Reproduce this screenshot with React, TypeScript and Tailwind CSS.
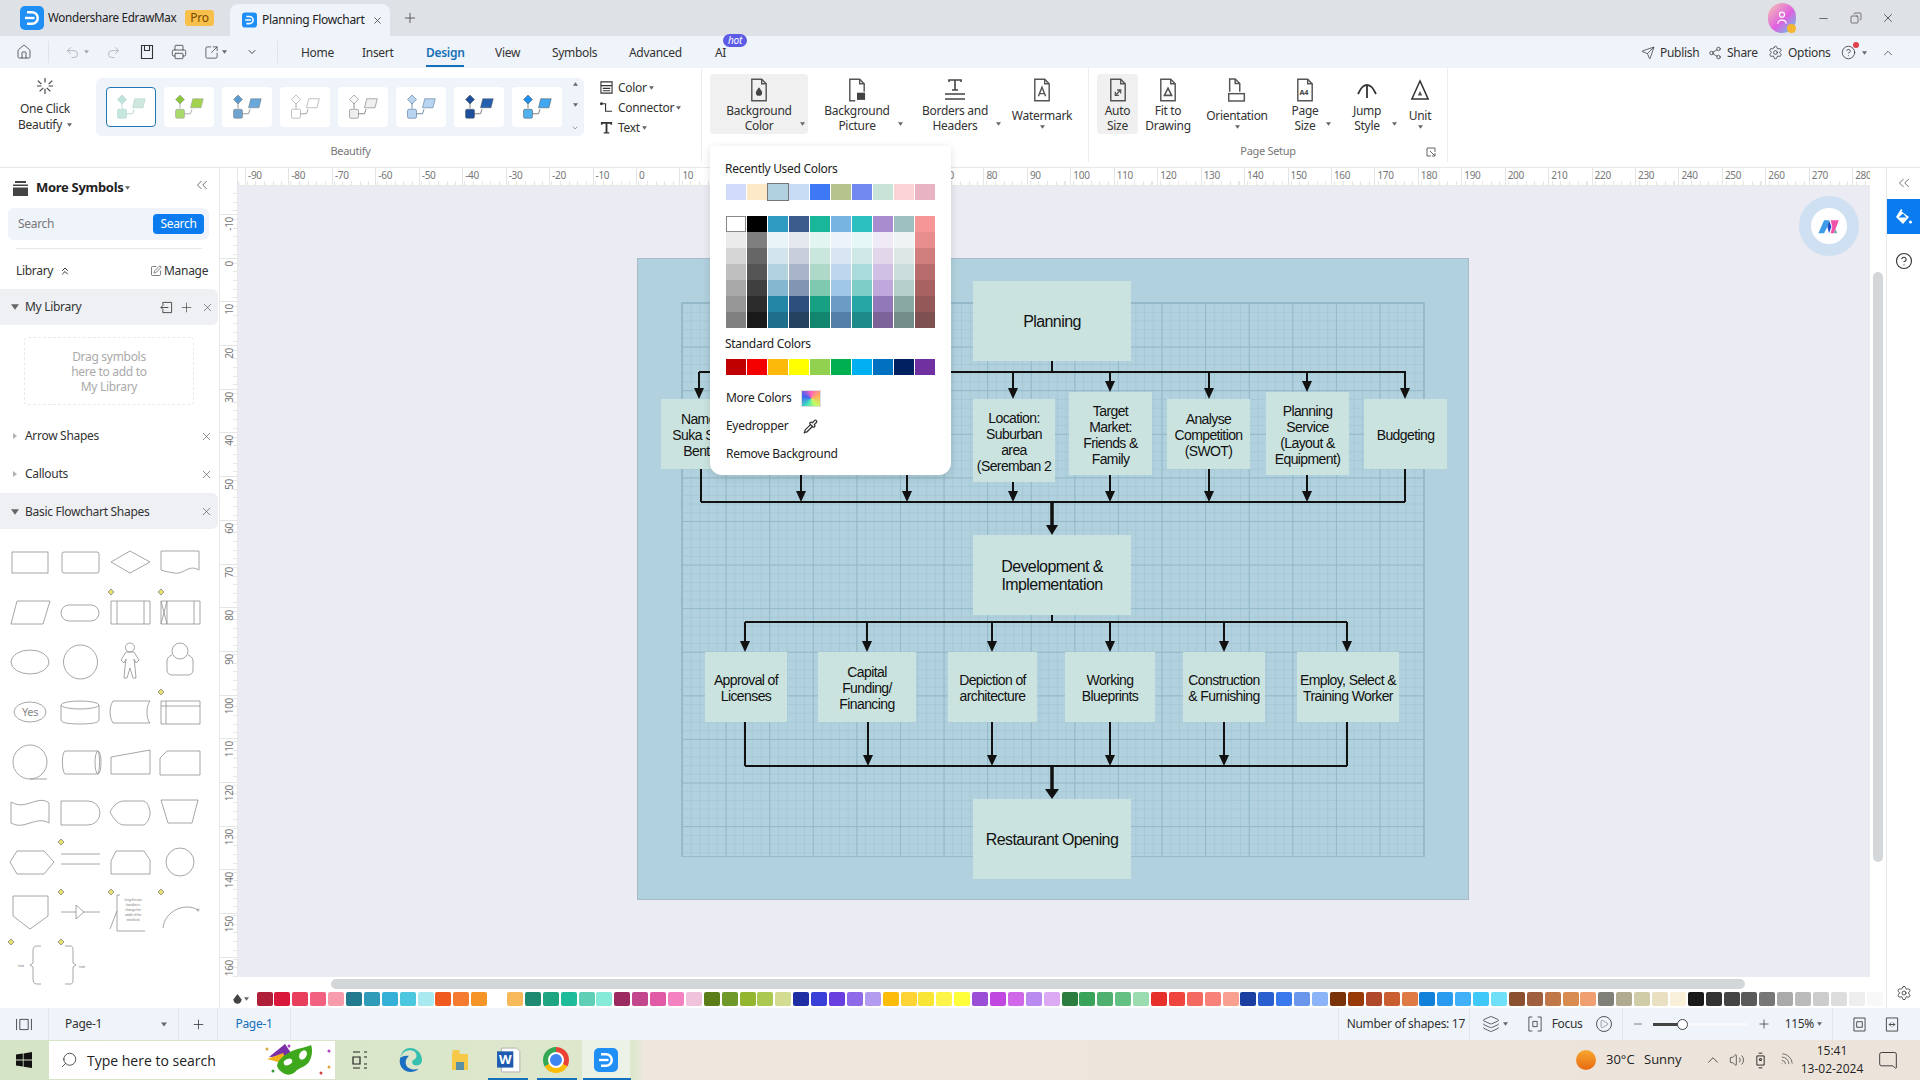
import type { ReactNode } from "react"
import {
  Home,
  Undo2,
  Redo2,
  Printer,
  SquareArrowOutUpRight,
  ChevronDown,
  ChevronUp,
  ChevronsLeft,
  ChevronsUp,
  Send,
  Share2,
  Settings,
  CircleHelp,
  X,
  Plus,
  Minus,
  SquarePen,
  Search,
  Copy,
  Layers,
  Play,
  Volume2,
  Wifi,
  MessageSquare,
  Pipette,
} from "lucide-react"

const font = "font-['Noto_Sans','Open_Sans',sans-serif]"

const Caret = ({ className = "" }: { className?: string }) => (
  <svg viewBox="0 0 6 4" className={`w-[5px] h-[4px] fill-[#666] ${className}`}>
    <path d="M0 0h6L3 4z" />
  </svg>
)

const EdrawLogo = ({ size = "w-6 h-6" }: { size?: string }) => (
  <svg viewBox="0 0 24 24" className={size}>
    <rect width="24" height="24" rx="5" fill="#1f8ff5" />
    <path d="M7 5h5a7 7 0 0 1 0 14H7v-2.500h5a4.500 4.500 0 0 0 0-9H7z" fill="#fff" />
    <path d="M5 10.800h9.500v2.400H5z" fill="#fff" />
  </svg>
)

// document outline used by most of the ribbon icons
const Doc = ({ children }: { children?: ReactNode }) => (
  <svg viewBox="0 0 20 26" className="w-[18px] h-[24px] fill-none stroke-[#555] stroke-[1.6]">
    <path d="M2 1h11l5 5v19H2z" />
    <path d="M13 1v5h5" />
    {children}
  </svg>
)

const ribbonIcon: Record<string, ReactNode> = {
  bgColor: (
    <Doc>
      <path d="M10 10c2 3 3.500 4.400 3.500 6a3.500 3.500 0 0 1-7 0c0-1.600 1.500-3 3.500-6z" className="fill-[#444] stroke-none" />
    </Doc>
  ),
  bgPicture: (
    <svg viewBox="0 0 20 26" className="w-[18px] h-[24px] fill-none stroke-[#555] stroke-[1.6]">
      <path d="M8 25H2V1h11l5 5v9" />
      <path d="M13 1v5h5" />
      <rect x="10" y="16" width="9" height="8" className="fill-[#444] stroke-none" />
    </svg>
  ),
  borders: (
    <svg viewBox="0 0 24 24" className="w-[24px] h-[24px] stroke-[#444] stroke-[1.6] fill-none">
      <path d="M6 4V2h12v2M12 2v10M9 12h6M2 16h20M2 21h20" />
    </svg>
  ),
  watermark: (
    <Doc>
      <path d="M6 20l4-10 4 10M7.500 17h5" />
    </Doc>
  ),
  autoSize: (
    <Doc>
      <path d="M8 18l5-5M9 13h4v4M7 15v4h4" className="stroke-[1.4]" />
    </Doc>
  ),
  fit: (
    <Doc>
      <path d="M10 11l4 8H6z" className="stroke-[1.8]" />
    </Doc>
  ),
  orientation: (
    <svg viewBox="0 0 24 26" className="w-[22px] h-[24px] fill-none stroke-[#555] stroke-[1.6]">
      <path d="M4 15V1h6l5 5v9" />
      <path d="M10 1v5h5" />
      <rect x="3" y="17" width="17" height="8" />
    </svg>
  ),
  pageSize: (
    <Doc>
      <text x="4" y="19" className="fill-[#444] stroke-none text-[8px] font-bold">A4</text>
    </Doc>
  ),
  jump: (
    <svg viewBox="0 0 24 24" className="w-[24px] h-[24px] fill-none stroke-[#333] stroke-[1.8]">
      <path d="M3 16c3-6 5-9 9-9s6 3 9 9M12 7v13" />
    </svg>
  ),
  unit: (
    <svg viewBox="0 0 22 24" className="w-[20px] h-[24px] fill-none stroke-[#333] stroke-[1.6]">
      <path d="M11 2l9 20H2z" />
      <path d="M11 13l2.500 5h-5z" className="fill-[#555] stroke-none" />
    </svg>
  ),
}

const RibbonBtn = ({ icon, lines, width, arrow, active }: { icon: string; lines: string[]; width: string; arrow?: "side" | "below"; active?: boolean }) => (
  <div className={`relative h-[60px] flex flex-col items-center ${width} ${active ? "bg-[#f0f0f0] rounded-sm" : ""}`}>
    <div className="h-[27px] mt-[2px] flex items-center justify-center">{ribbonIcon[icon]}</div>
    <div className={`text-center text-[12px] leading-[15px] text-[#333] whitespace-nowrap ${lines.length === 1 ? "mt-[5px]" : ""}`}>
      {lines.map((l) => (
        <div key={l}>{l}</div>
      ))}
    </div>
    {arrow === "side" && <Caret className="absolute right-[3px] bottom-[8px]" />}
    {arrow === "below" && <Caret className="mt-[2px]" />}
  </div>
)

const gallery = [
  { d: "#bfe3dc", p: "#cfe8df", s: "#c6e6e0", line: "#a8cfc8" },
  { d: "#8cc63f", p: "#a3d24f", s: "#a9d86b", line: "#999" },
  { d: "#5b9bd0", p: "#6aa8dc", s: "#6ea3d0", line: "#777" },
  { d: "#fff", p: "#fff", s: "#fff", line: "#888" },
  { d: "#f8f8f8", p: "#f0f0f0", s: "#eee", line: "#666" },
  { d: "#b8d4ee", p: "#b8d4f0", s: "#b8d4f0", line: "#44688c" },
  { d: "#1d4f9c", p: "#2460b0", s: "#1d4f9c", line: "#555" },
  { d: "#1f8ff0", p: "#40a8f0", s: "#50b0f0", line: "#555" },
]

const Thumb = ({ d, p, s, line }: { d: string; p: string; s: string; line: string }) => (
  <svg viewBox="0 0 50 40" className="w-[38px] h-[30px]">
    <path d="M13 14v8M13 29h14l2-6" fill="none" stroke={line} strokeWidth="1" />
    <path d="M13 4l6 6-6 6-6-6z" fill={d} stroke={line} strokeWidth=".7" />
    <path d="M30 9h14l-3 12H27z" fill={p} stroke={line} strokeWidth=".7" />
    <rect x="7" y="23" width="12" height="12" rx="2" fill={s} stroke={line} strokeWidth=".7" />
  </svg>
)

const recent = ["#d0dcfa", "#fde8c8", "#b1d1de", "#c8dcf5", "#3f78f5", "#b4c48c", "#7088f0", "#c8e4d8", "#fcd4d8", "#e8b4c4"]
const standard = ["#c00000", "#f50000", "#fdb90a", "#ffff00", "#92d050", "#00b050", "#00b0f0", "#0070c0", "#002060", "#7030a0"]
const paletteRows = [
  ["#ffffff", "#000000", "#2e9cc0", "#3b5b8c", "#1ab69a", "#78b4e2", "#2cc0c0", "#a98cd0", "#9fc0c0", "#f79696"],
  ["#ebebeb", "#7f7f7f", "#e9f4f8", "#e4e8ee", "#e3f5f0", "#ecf3fa", "#e5f7f6", "#f0eaf6", "#eef3f3", "#e88d8d"],
  ["#d5d5d5", "#666666", "#d2e4ec", "#c8cedc", "#c9e7dc", "#d8e6f4", "#cfe8e8", "#e2d6ea", "#dce7e6", "#d07d7d"],
  ["#bfbfbf", "#555555", "#b2d2e0", "#a8b4c8", "#aed9c9", "#bfd7ee", "#a9dbdc", "#d0c0e6", "#cbdedc", "#b86d6d"],
  ["#a9a9a9", "#3f3f3f", "#84b8d0", "#8296b2", "#7fc9b0", "#a0c6e8", "#7fcdc8", "#bfa8dc", "#b5cfcb", "#a86262"],
  ["#969696", "#2c2c2c", "#2386a5", "#2c4f7d", "#17a083", "#6c9cc6", "#26a6a5", "#9178b8", "#8aa8a2", "#945858"],
  ["#808080", "#1a1a1a", "#1d6f8c", "#24415f", "#12856e", "#547fa6", "#1f8a8a", "#7c6498", "#748c8a", "#7f5050"],
]

const barColors = [
  "#b01f3a", "#d9173a", "#e8405c", "#f2617f", "#f89cab",
  "#227a8e", "#2f9bb8", "#35b1d8", "#4cc7e0", "#a8eaf0",
  "#f05a1e", "#f47b30", "#f69527", "#ffffff", "#f8b95a",
  "#1f8a72", "#1fa582", "#1fbc9c", "#5fcfb5", "#86ead8",
  "#9a2a5f", "#c2478c", "#e05aa5", "#f582c0", "#f0c2dc",
  "#5a7d17", "#6f9a2a", "#93b52f", "#abc950", "#d3dc90",
  "#1f2fa3", "#3a3fd8", "#6a3fe0", "#8e6ae8", "#b39cf0",
  "#fdbb0a", "#fdd335", "#f8e535", "#fdf54a", "#ffff3a",
  "#9b4fd6", "#c048e0", "#d066e8", "#b98af0", "#dcaaf5",
  "#2a7d3e", "#3aa35a", "#50b070", "#64c083", "#9adbb0",
  "#e8302a", "#f0453f", "#f56a60", "#f8827a", "#f9a090",
  "#1a3fa0", "#2a5fd0", "#3a78ee", "#6a96ec", "#8ab4f5",
  "#7a3208", "#983a08", "#b0482a", "#c85e32", "#e07a45",
  "#1080d8", "#2a9cf0", "#40b0f8", "#40c8f8", "#6fe0f8",
  "#8a5030", "#a06040", "#c07848", "#d88c50", "#f0a070",
  "#808078", "#b0aa90", "#d0cca8", "#e8e0c0", "#f8f0d8",
  "#1a1a1a", "#333333", "#444444", "#5a5a5a", "#777777", "#aaaaaa", "#bbbbbb", "#cccccc", "#dddddd", "#eeeeee", "#f8f8f8",
]

const hLabels = Array.from({ length: 38 }, (_, i) => -90 + i * 10)
const vLabels = Array.from({ length: 18 }, (_, i) => -10 + i * 10)

const nodes = [
  { t: ["Planning"], c: "left-[336px] top-[23px] w-[158px] h-[80px] text-[16px] leading-[18px]" },
  { t: ["Name:", "Suka Sari", "Bento"], c: "left-[24px] top-[141px] w-[78px] h-[70px]" },
  { t: ["Location:", "Suburban", "area", "(Seremban 2"], c: "left-[336px] top-[141px] w-[82px] h-[83px]" },
  { t: ["Target", "Market:", "Friends &", "Family"], c: "left-[432px] top-[134px] w-[83px] h-[83px]" },
  { t: ["Analyse", "Competition", "(SWOT)"], c: "left-[530px] top-[141px] w-[83px] h-[70px]" },
  { t: ["Planning", "Service", "(Layout &", "Equipment)"], c: "left-[629px] top-[134px] w-[83px] h-[83px]" },
  { t: ["Budgeting"], c: "left-[727px] top-[141px] w-[83px] h-[70px]" },
  { t: ["Development &", "Implementation"], c: "left-[336px] top-[277px] w-[158px] h-[80px] text-[16px] leading-[18px]" },
  { t: ["Approval of", "Licenses"], c: "left-[68px] top-[394px] w-[82px] h-[70px]" },
  { t: ["Capital", "Funding/", "Financing"], c: "left-[181px] top-[394px] w-[98px] h-[70px]" },
  { t: ["Depiction of", "architecture"], c: "left-[311px] top-[394px] w-[89px] h-[70px]" },
  { t: ["Working", "Blueprints"], c: "left-[428px] top-[394px] w-[90px] h-[70px]" },
  { t: ["Construction", "& Furnishing"], c: "left-[546px] top-[394px] w-[82px] h-[70px]" },
  { t: ["Employ, Select &", "Training Worker"], c: "left-[660px] top-[394px] w-[102px] h-[70px]" },
  { t: ["Restaurant Opening"], c: "left-[336px] top-[541px] w-[158px] h-[80px] text-[16px] leading-[18px]" },
]

const lines = [
  "M415 103v11M62 114H769M62 114v20M376 114v20M473 114v14M572 114v20M670 114v14M768 114v20",
  "M64 211v33M164 205v32M270 205v32M376 224v13M473 217v20M572 211v26M670 217v20M768 211v33M64 244H768",
  "M415 357v7M108 364H710M108 364v22M230 364v22M355 364v22M473 364v22M587 364v22M710 364v22",
  "M108 464v44M231 464v36M355 464v36M473 464v36M587 464v36M710 464v44M108 508H710",
]
const heads = [
  [62, 141], [376, 141], [473, 134], [572, 141], [670, 134], [768, 141],
  [164, 244], [270, 244], [376, 244], [473, 244], [572, 244], [670, 244],
  [108, 394], [230, 394], [355, 394], [473, 394], [587, 394], [710, 394],
  [231, 508], [355, 508], [473, 508], [587, 508],
]

const Diagram = () => (
  <svg viewBox="0 0 831 642" className="absolute inset-0 w-[831px] h-[642px]">
    {lines.map((d) => (
      <path key={d} d={d} fill="none" stroke="#111" strokeWidth="2" />
    ))}
    <path d="M415 244v24M415 508v24" stroke="#111" strokeWidth="3.500" />
    <path d="M409 267h12l-6 10zM408 531h14l-7 10z" fill="#111" />
    {heads.map(([x, y]) => (
      <path key={`${x}-${y}`} d={`M${x - 5} ${y - 11}h10l-5 11z`} fill="#111" />
    ))}
  </svg>
)

const Marker = ({ x = 6 }: { x?: number }) => <path d={`M${x} 2l3 3-3 3-3-3z`} fill="#e8e070" stroke="#777" strokeWidth=".7" />

const shapes: ReactNode[] = [
  <rect x="7" y="15" width="36" height="21" />,
  <rect x="7" y="15" width="37" height="21" rx="2" />,
  <path d="M25 14l20 11-20 11L6 25z" />,
  <path d="M6 14h38v19c-5-3-9-2-13 0s-8 4-12 3-8-1-13-3z" />,
  <path d="M12 14H45L38 37H6z" />,
  <rect x="6" y="18" width="38" height="16" rx="8" />,
  <>
    <Marker />
    <path d="M6 14h39v23H6zM12 14v23M39 14v23" />
  </>,
  <>
    <Marker />
    <path d="M6 14h39v23H6zM12 14v23M39 14v23M6 14l6 23M12 14L6 37" />
  </>,
  <ellipse cx="25" cy="25" rx="19" ry="12" />,
  <circle cx="25.500" cy="25" r="17" />,
  <path d="M25 6a4.500 4.500 0 0 1 0 9 4.500 4.500 0 0 1 0-9zm-4 9l-5 8 3 3 2-4-1 8-1 11h3l3-10 3 10h3l-1-11-1-8 2 4 3-3-5-8z" />,
  <>
    <circle cx="25" cy="14" r="8" />
    <path d="M17 18c-3 1-5 3-5 6v9c0 3 2 5 5 5h16c3 0 5-2 5-5v-9c0-3-2-5-5-6" />
  </>,
  <>
    <ellipse cx="25" cy="25" rx="16" ry="10" />
    <text x="25" y="29" textAnchor="middle" className="fill-[#888] stroke-none text-[11px]">Yes</text>
  </>,
  <>
    <ellipse cx="25" cy="18" rx="19" ry="4" />
    <path d="M6 18v15c0 3 9 4 19 4s19-1 19-4V18" />
  </>,
  <path d="M8 14h37c-2 3-3 6-3 11s1 9 3 11H8c-2-3-3-7-3-11s1-8 3-11z" />,
  <>
    <Marker />
    <path d="M6 14h39v23H6zM11 14v23M6 19h39" />
  </>,
  <>
    <circle cx="25" cy="25" r="17" />
    <path d="M25 42h17" />
  </>,
  <>
    <path d="M10 14h33c2 3 2 20 0 23H10c-3-2-4-20 0-23z" />
    <ellipse cx="43" cy="25.500" rx="3" ry="11.500" />
  </>,
  <path d="M6 20l39-7v24H6z" />,
  <path d="M12 14h33v24H5V21z" />,
  <path d="M6 15c6 3 10 4 19 1s14-4 19 0v20c-5-3-10-3-19 0s-13 3-19 0z" />,
  <path d="M6 14h27a11 11 0 0 1 0 24H6z" />,
  <path d="M5 25c3-6 8-11 14-11h20c4 2 6 8 6 12s-2 9-6 12H19c-6 0-11-7-14-13z" />,
  <path d="M6 13h37l-6 23H13z" />,
  <path d="M12 14h27l10 11-10 12H12L5 25z" />,
  <>
    <Marker />
    <path d="M6 17h39M6 27h39" />
  </>,
  <path d="M6 24l5-10h28l6 9v14H6z" />,
  <circle cx="25" cy="25" r="14" />,
  <path d="M8 9h35v20L25 42 8 29z" />,
  <>
    <Marker />
    <path d="M6 25h15M21 18l8 7-8 7zM29 25h16" />
  </>,
  <>
    <Marker />
    <path d="M15 8h-3v36h28M12 24L5 42" />
    <text x="28" y="14" textAnchor="middle" className="fill-[#888] stroke-none text-[3.5px]">long the axis</text>
    <text x="28" y="19" textAnchor="middle" className="fill-[#888] stroke-none text-[3.5px]">handles to</text>
    <text x="28" y="24" textAnchor="middle" className="fill-[#888] stroke-none text-[3.5px]">change the</text>
    <text x="28" y="29" textAnchor="middle" className="fill-[#888] stroke-none text-[3.5px]">width of the</text>
    <text x="28" y="34" textAnchor="middle" className="fill-[#888] stroke-none text-[3.5px]">text block</text>
  </>,
  <>
    <Marker />
    <path d="M8 41c1-12 12-21 24-21 4 0 8 1 11 3" />
    <circle cx="43" cy="23" r="1" />
  </>,
  <>
    <Marker />
    <path d="M36 9h-4c-3 0-4 2-4 5v12l-3 2 3 2v12c0 3 1 5 4 5h4" />
    <text x="19" y="30" textAnchor="end" className="fill-[#888] stroke-none text-[4px]">text</text>
  </>,
  <>
    <Marker />
    <path d="M10 9h5c3 0 3 2 3 5v12l3 2-3 2v12c0 3 0 5-3 5h-5" />
    <text x="24" y="31" className="fill-[#888] stroke-none text-[4px]">text</text>
  </>,
]

const Mask = () => (
  <svg viewBox="0 0 76 38" className="w-[76px] h-[38px]">
    <g fill="#d9a83a">
      <circle cx="8" cy="8" r="1.500" />
      <circle cx="70" cy="10" r="1.500" fill="#b040c0" />
      <circle cx="14" cy="30" r="1.500" fill="#3a9a3a" />
      <circle cx="62" cy="32" r="1.500" fill="#d04040" />
      <circle cx="70" cy="26" r="1.500" />
      <circle cx="30" cy="5" r="1.500" fill="#b040c0" />
    </g>
    <path d="M10 16L26 3l8 12z" fill="#7a2fa8" />
    <path d="M8 18l16-6 6 12z" fill="#f2b21e" />
    <path d="M18 25c4 9 14 12 20 4 5-3 9-4 12-8 3-5 4-12 2-17-6 3-14 3-21 7-7 4-12 8-13 14z" fill="#3fa71c" />
    <ellipse cx="29" cy="21" rx="4.500" ry="3" fill="#fff" transform="rotate(-25 29 21)" />
    <ellipse cx="44" cy="14" rx="3.500" ry="5" fill="#fff" transform="rotate(30 44 14)" />
  </svg>
)

const vbar = "w-px self-stretch bg-[#e3e6ed]"

export default function App() {
  return (
    <div className={`relative w-[1920px] h-[1080px] overflow-hidden bg-white flex flex-col ${font} text-[12px] text-[#333] tracking-[-0.3px]`}>
      {/* Title bar */}
      <div className="h-[36px] bg-[#dee1e6] flex items-end shrink-0">
        <div className="w-[230px] h-[36px] flex items-center pl-[20px]">
          <EdrawLogo />
          <span className="ml-[4px] text-[11.7px] text-[#222] w-[137px] whitespace-nowrap">Wondershare EdrawMax</span>
          <span className="w-[29px] h-[16px] rounded-[3px] bg-[#f8c04a] text-[#7a4a00] text-[12px] leading-[16px] text-center">Pro</span>
        </div>
        <div className="w-[160px] h-[32px] bg-[#eff3fa] rounded-t-lg flex items-center pl-[12px]">
          <EdrawLogo size="w-[15px] h-[18px]" />
          <span className="ml-[5px] text-[12px] text-[#222] w-[110px] whitespace-nowrap">Planning Flowchart</span>
          <X size={11} className="text-[#555]" />
        </div>
        <div className="h-[36px] flex items-center ml-[12px]">
          <Plus size={16} strokeWidth={1.25} className="text-[#444]" />
        </div>
        <div className="ml-auto h-[36px] flex items-center">
          <div className="relative w-[28px] h-[30px] rounded-full bg-[linear-gradient(135deg,#f6c7b0,#e060e0_55%,#50d8e8)] flex items-center justify-center">
            <svg viewBox="0 0 12 16" className="w-[10px] h-[14px] fill-none stroke-white stroke-[1.4]">
              <circle cx="6" cy="4" r="3" />
              <path d="M1 15c0-6 10-6 10 0" />
            </svg>
            <span className="absolute right-0 bottom-0 w-[9px] h-[9px] rounded-full bg-[#f5b530]" />
          </div>
          <Minus size={13} strokeWidth={1.25} className="ml-[21px] text-[#333]" />
          <Copy size={12} strokeWidth={1.25} className="ml-[20px] text-[#333] -scale-x-100" />
          <X size={14} strokeWidth={1.25} className="ml-[19px] mr-[25px] text-[#333]" />
        </div>
      </div>

      {/* Quick access and tabs */}
      <div className="h-[32px] bg-[#eff3fa] flex items-center shrink-0 text-[#444]">
        <Home size={16} strokeWidth={1.25} className="ml-[16px]" />
        <div className="w-px h-[22px] bg-[#dfe3ea] ml-[16px]" />
        <Undo2 size={15} strokeWidth={1.25} className="ml-[16px] text-[#aaa]" />
        <Caret className="ml-[4px] opacity-50" />
        <Redo2 size={15} strokeWidth={1.25} className="ml-[17px] text-[#aaa]" />
        <svg viewBox="0 0 16 16" className="w-[16px] h-[16px] ml-[18px] fill-none stroke-[#333] stroke-[1.1]">
          <path d="M2.500 1.500h11v13h-11zM5.500 1.500v5h5v-5" />
        </svg>
        <Printer size={16} strokeWidth={1.25} className="ml-[16px]" />
        <SquareArrowOutUpRight size={15} strokeWidth={1.25} className="ml-[17px]" />
        <Caret className="ml-[3px]" />
        <ChevronDown size={12} className="ml-[19px]" />
        <div className="w-px h-[22px] bg-[#dfe3ea] ml-[19px]" />
        <div className="flex items-center h-[32px] ml-[23px] pt-[2px] text-[12px] text-[#333]">
          <span className="w-[61px]">Home</span>
          <span className="w-[64px]">Insert</span>
          <span className="relative w-[69px] h-[30px] leading-[30px] font-semibold text-[#1470b8]">
            Design
            <span className="absolute left-0 bottom-[1px] w-[38px] h-[2px] bg-[#1470b8]" />
          </span>
          <span className="w-[57px]">View</span>
          <span className="w-[77px]">Symbols</span>
          <span className="w-[86px]">Advanced</span>
          <span className="relative">
            AI
            <span className="absolute left-[8px] -top-[10px] w-[24px] h-[13px] rounded-full bg-[#5b5be6] text-white text-[10px] leading-[12px] text-center italic">hot</span>
          </span>
        </div>
        <div className="ml-auto flex items-center pt-[1px] text-[12px] text-[#333]">
          <Send size={14} strokeWidth={1.25} />
          <span className="ml-[5px] w-[48px]">Publish</span>
          <Share2 size={14} strokeWidth={1.25} />
          <span className="ml-[5px] w-[41px]">Share</span>
          <Settings size={15} strokeWidth={1.25} />
          <span className="ml-[5px] w-[53px]">Options</span>
          <div className="relative">
            <CircleHelp size={15} strokeWidth={1.25} />
            <span className="absolute -right-[3px] -top-[3px] w-[6px] h-[6px] rounded-full bg-[#e0404a]" />
          </div>
          <Caret className="ml-[6px]" />
          <ChevronUp size={14} strokeWidth={1.25} className="ml-[14px] mr-[25px]" />
        </div>
      </div>

      {/* Ribbon */}
      <div className="h-[100px] flex shrink-0 border-b border-[#e8e8e8] bg-white">
        <div className="w-[702px] h-[94px] flex flex-col border-r border-[#eeeeee]">
          <div className="flex h-[74px]">
            <div className="w-[90px] flex flex-col items-center pt-[9px] text-center leading-[16px]">
              <svg viewBox="0 0 20 20" className="w-[18px] h-[18px] stroke-[#444] stroke-[1.3] fill-none mb-[6px]">
                <path d="M10 1v5M10 13v6M2 4l4 4M18 4l-4 4M4 16l4-4M16 16l-4-4M1 10h5M14 10h5" />
              </svg>
              <span>One Click</span>
              <span className="flex items-center gap-[5px]">
                Beautify <Caret />
              </span>
            </div>
            <div className="ml-[6px] mt-[10px] w-[488px] h-[58px] bg-[#eff3fa] rounded-md flex items-center pl-[10px]">
              <div className="flex gap-[8px]">
                {gallery.map((g, i) => (
                  <div key={i} className={`w-[50px] h-[40px] rounded-[4px] bg-white flex items-center justify-center ${i === 0 ? "border border-[#1f78b4]" : ""}`}>
                    <Thumb {...g} />
                  </div>
                ))}
              </div>
              <div className="ml-[9px] h-[50px] flex flex-col justify-between items-center text-[#777]">
                <Caret className="rotate-180" />
                <Caret />
                <ChevronDown size={8} />
              </div>
            </div>
            <div className="ml-[16px] pt-[12px] flex flex-col gap-[5px] text-[12px] leading-[15px]">
              <div className="flex items-center">
                <svg viewBox="0 0 14 14" className="w-[13px] h-[13px] fill-none stroke-[#333] stroke-[1.2]">
                  <path d="M1 1h12v12H1zM1 5h12M3 8h8M3 10.500h8" />
                </svg>
                <span className="ml-[5px]">Color</span>
                <Caret className="ml-[2px]" />
              </div>
              <div className="flex items-center">
                <svg viewBox="0 0 14 14" className="w-[13px] h-[13px] fill-none stroke-[#333] stroke-[1.2]">
                  <path d="M1 3h5v8h7" />
                  <circle cx="1.500" cy="3" r="1" />
                </svg>
                <span className="ml-[5px]">Connector</span>
                <Caret className="ml-[2px]" />
              </div>
              <div className="flex items-center">
                <svg viewBox="0 0 14 14" className="w-[13px] h-[13px] fill-[#333]">
                  <path d="M1 1h12v3h-1.500l-.5-1H8v9h2v1.500H4V12h2V3H3l-.5 1H1z" />
                </svg>
                <span className="ml-[5px]">Text</span>
                <Caret className="ml-[2px]" />
              </div>
            </div>
          </div>
          <div className="h-[20px] leading-[20px] mt-[-1px] text-center text-[11px] text-[#777]">Beautify</div>
        </div>
        <div className="flex pl-[8px] pt-[6px] w-[386px] h-[94px]">
          <RibbonBtn icon="bgColor" lines={["Background", "Color"]} width="w-[98px]" arrow="side" active />
          <RibbonBtn icon="bgPicture" lines={["Background", "Picture"]} width="w-[98px]" arrow="side" />
          <RibbonBtn icon="borders" lines={["Borders and", "Headers"]} width="w-[98px]" arrow="side" />
          <RibbonBtn icon="watermark" lines={["Watermark"]} width="w-[76px]" arrow="below" />
        </div>
        <div className="relative w-[360px] h-[94px] flex flex-col border-x border-[#eeeeee]">
          <div className="flex pl-[8px] pt-[6px] h-[74px]">
            <RibbonBtn icon="autoSize" lines={["Auto", "Size"]} width="w-[41px]" active />
            <RibbonBtn icon="fit" lines={["Fit to", "Drawing"]} width="w-[60px]" />
            <RibbonBtn icon="orientation" lines={["Orientation"]} width="w-[78px]" arrow="below" />
            <RibbonBtn icon="pageSize" lines={["Page", "Size"]} width="w-[58px]" arrow="side" />
            <RibbonBtn icon="jump" lines={["Jump", "Style"]} width="w-[66px]" arrow="side" />
            <RibbonBtn icon="unit" lines={["Unit"]} width="w-[40px]" arrow="below" />
          </div>
          <div className="h-[20px] leading-[20px] mt-[-1px] text-center text-[11px] text-[#777]">Page Setup</div>
          <svg viewBox="0 0 10 10" className="absolute right-[11px] bottom-[5px] w-[10px] h-[10px] fill-none stroke-[#666]">
            <path d="M9 5V1H1v8h4M4 4l5 5M6 9h3V6" />
          </svg>
        </div>
      </div>

      {/* Main area */}
      <div className="flex flex-1 min-h-0">
        <div className="w-[220px] shrink-0 bg-white border-r border-[#e8e8e8] flex flex-col overflow-hidden">
          <div className="h-[40px] flex items-center pl-[13px] relative">
            <svg viewBox="0 0 15 15" className="w-[15px] h-[15px] fill-[#444]">
              <path d="M2 0h11v2H2zM0 3.500h15V5H0zM0 6.500h15V15H0z" />
            </svg>
            <span className="ml-[8px] text-[13px] font-bold text-[#222]">More Symbols</span>
            <Caret className="ml-[2px]" />
            <ChevronsLeft size={18} strokeWidth={1} className="absolute left-[193px] top-[8px] text-[#444]" />
          </div>
          <div className="ml-[8px] w-[201px] h-[32px] bg-[#eff3fa] rounded-md flex items-center pl-[10px]">
            <span className="text-[#777] w-[135px]">Search</span>
            <span className="w-[51px] h-[20px] rounded bg-[#0a7cf0] text-white text-center leading-[20px]">Search</span>
          </div>
          <div className="ml-[16px] mt-[8px] w-[186px] h-px bg-[#e8e8e8]" />
          <div className="h-[40px] pt-[4px] flex items-center pl-[16px]">
            <span className="w-[38px] text-[#333]">Library</span>
            <ChevronsUp size={12} className="ml-[5px]" />
            <SquarePen size={12} strokeWidth={1.25} className="ml-[79px]" />
            <span className="ml-[2px]">Manage</span>
          </div>
          <div className="h-[36px] w-[218px] bg-[#eef0f4] rounded-r-md flex items-center pl-[11px]">
            <Caret className="w-[8px] h-[6px]" />
            <span className="ml-[6px] w-[135px]">My Library</span>
            <svg viewBox="0 0 14 14" className="w-[13px] h-[13px] fill-none stroke-[#444]">
              <path d="M3 4V1.500h9.500v11H3V10M9 7H1M4 4L1 7l3 3" />
            </svg>
            <Plus size={15} strokeWidth={1} className="ml-[6px]" />
            <X size={13} strokeWidth={1} className="ml-[7px]" />
          </div>
          <div className="ml-[24px] mt-[12px] w-[170px] h-[68px] rounded border border-dashed border-[#eaeaea] text-[#aaa] text-center leading-[15px] flex flex-col justify-center">
            <span>Drag symbols</span>
            <span>here to add to</span>
            <span>My Library</span>
          </div>
          <div className="h-[38px] mt-[12px] flex items-center pl-[12px]">
            <Caret className="w-[6px] h-[8px] -rotate-90 opacity-50" />
            <span className="ml-[7px] w-[175px]">Arrow Shapes</span>
            <X size={13} strokeWidth={1} />
          </div>
          <div className="h-[38px] flex items-center pl-[12px]">
            <Caret className="w-[6px] h-[8px] -rotate-90 opacity-50" />
            <span className="ml-[7px] w-[175px]">Callouts</span>
            <X size={13} strokeWidth={1} />
          </div>
          <div className="h-[36px] w-[218px] bg-[#eef0f4] rounded-r-md flex items-center pl-[11px] pt-[1px]">
            <Caret className="w-[8px] h-[6px]" />
            <span className="ml-[6px] w-[175px]">Basic Flowchart Shapes</span>
            <X size={13} strokeWidth={1} />
          </div>
          <div className="ml-[5px] mt-[8px] grid grid-cols-4 w-[200px]">
            {shapes.map((s, i) => (
              <svg key={i} viewBox="0 0 50 50" className="w-[50px] h-[50px] fill-none stroke-[#8f8f8f] stroke-[.8]">
                {s}
              </svg>
            ))}
          </div>
        </div>

        {/* Ruler, canvas and colour strip */}
        <div className="flex-1 min-w-0 flex flex-col">
          <div className="flex h-[18px] shrink-0 bg-white">
            <div className="w-[18px] shrink-0 border-r border-[#e8e8e8]" />
            <div className="flex-1 overflow-hidden flex pl-[7px] border-b border-[#e8e8e8] bg-[image:repeating-linear-gradient(90deg,#e6e6e6_0_1px,transparent_1px_8.7px)] bg-[size:100%_4px] bg-bottom bg-no-repeat">
              {hLabels.map((n) => (
                <div key={n} className="w-[43.45px] shrink-0 border-l border-[#e4e4e4] pl-[2px] text-[10px] leading-[14px] text-[#777]">
                  {n}
                </div>
              ))}
            </div>
            <div className="w-[16px] shrink-0" />
          </div>
          <div className="flex flex-1 min-h-0">
            <div className="w-[18px] shrink-0 overflow-hidden flex flex-col pt-[28px] border-r border-[#e8e8e8] bg-white bg-[image:repeating-linear-gradient(0deg,#e6e6e6_0_1px,transparent_1px_8.7px)] bg-[size:4px_100%] bg-right bg-no-repeat">
              {vLabels.map((n) => (
                <div key={n} className="h-[43.7px] shrink-0 border-t border-[#e4e4e4] flex items-start justify-center pt-[2px]">
                  <span className="[writing-mode:vertical-rl] rotate-180 text-[10px] leading-[14px] text-[#777]">{n}</span>
                </div>
              ))}
            </div>
            <div className="relative flex-1 bg-[#ebebf3] overflow-hidden">
              <div className="absolute left-[399px] top-[72px] w-[832px] h-[642px] bg-[#b1d1de] shadow-[inset_0_0_0_1px_#a8bcc8] font-['Liberation_Sans',sans-serif]">
                <div className="absolute left-[44px] top-[44px] w-[744px] h-[555px] border border-[#97bbcb] bg-[image:linear-gradient(#93b8c8_1px,transparent_1px),linear-gradient(90deg,#93b8c8_1px,transparent_1px),linear-gradient(#a6c8d6_1px,transparent_1px),linear-gradient(90deg,#a6c8d6_1px,transparent_1px)] bg-[size:43.6px_43.6px,43.6px_43.6px,8.72px_8.72px,8.72px_8.72px]" />
                <Diagram />
                {nodes.map((n) => (
                  <div key={n.t[0]} className={`absolute bg-[#cbe3df] pt-[2px] flex flex-col items-center justify-center text-center text-[#111] text-[14px] leading-[16px] tracking-[-0.6px] whitespace-nowrap ${n.c}`}>
                    {n.t.map((l) => (
                      <span key={l}>{l}</span>
                    ))}
                  </div>
                ))}
              </div>
              <div className="absolute left-[1561px] top-[10px] w-[60px] h-[60px] rounded-full bg-[#cfe0f2] flex items-center justify-center">
                <div className="w-[36px] h-[36px] rounded-full bg-white flex items-center justify-center">
                  <svg viewBox="0 0 28 22" className="w-[24px] h-[18px]">
                    <path d="M1 20L8 4h6l-2 8-4 8z" fill="#3d9be8" />
                    <path d="M12 12l2-8 3 8-3 8z" fill="#2050c8" />
                    <path d="M16 4h10l-6 16h-4l2-8z" fill="#f050a8" />
                    <path d="M20 20l2-5 2 5z" fill="#6aa" />
                  </svg>
                </div>
              </div>
            </div>
            <div className="w-[16px] shrink-0 bg-white flex justify-center">
              <div className="w-[10px] h-[590px] mt-[86px] rounded-full bg-[#d4d7da]" />
            </div>
          </div>
          <div className="h-[13px] shrink-0 bg-white pl-[111px]">
            <div className="w-[1414px] h-[10px] mt-[2px] rounded-full bg-[#d4d7da]" />
          </div>
          <div className="h-[18px] shrink-0 flex items-center pl-[12px] overflow-hidden bg-white">
            <svg viewBox="0 0 12 14" className="w-[11px] h-[13px] fill-[#444] shrink-0">
              <path d="M6 1l4.500 6A4.500 4.500 0 1 1 1.500 7z" />
            </svg>
            <Caret className="ml-[1px] shrink-0" />
            <div className="ml-[7.5px] flex gap-[1.9px]">
              {barColors.map((c, i) => (
                <svg key={i} viewBox="0 0 16 14" className="w-[16px] h-[14px] shrink-0">
                  <rect width="16" height="14" rx="2" fill={c} />
                </svg>
              ))}
            </div>
          </div>
        </div>

        {/* Right rail */}
        <div className="w-[34px] shrink-0 bg-white border-l border-[#e8e8e8] flex flex-col items-center">
          <ChevronsLeft size={18} strokeWidth={1} className="mt-[6px] text-[#444]" />
          <div className="mt-[7px] w-[34px] h-[35px] bg-[#0a7cf0] flex items-center justify-center">
            <svg viewBox="0 0 18 18" className="w-[18px] h-[18px] fill-white">
              <path d="M6 1l1.500 1-1 1.500L14 9l-6 7-7-7zM3.500 9.500h8L8 5.500z" />
              <circle cx="15.500" cy="14" r="1.500" />
            </svg>
          </div>
          <CircleHelp size={18} strokeWidth={1.5} className="mt-[18px] text-[#333]" />
          <Settings size={16} strokeWidth={1.25} className="mt-auto mb-[7px] text-[#333]" />
        </div>
      </div>

      {/* Status bar */}
      <div className="h-[32px] bg-[#eff3fa] flex items-center shrink-0 text-[12px] text-[#333]">
        <div className="w-[49px] h-[32px] border-r border-[#e3e6ed] flex items-center justify-center">
          <svg viewBox="0 0 18 14" className="w-[18px] h-[13px] fill-none stroke-[#444]">
            <path d="M1 1v12M17 1v12M4.500 1.500h9v11h-9z" />
          </svg>
        </div>
        <div className="w-[130px] h-[32px] border-r border-[#e3e6ed] flex items-center pl-[16px]">
          <span className="w-[96px]">Page-1</span>
          <Caret className="w-[6px] h-[5px]" />
        </div>
        <div className="w-[39px] h-[32px] border-r border-[#e3e6ed] flex items-center justify-center">
          <Plus size={15} strokeWidth={1.25} />
        </div>
        <div className="w-[73px] h-[32px] border-r border-[#e3e6ed] flex items-center justify-center text-[#1470b8]">Page-1</div>
        <div className="ml-auto h-[32px] flex items-center">
          <div className={vbar} />
          <span className="ml-[8px] w-[122px] whitespace-nowrap">Number of shapes: 17</span>
          <div className={vbar} />
          <Layers size={18} strokeWidth={1} className="ml-[12px]" />
          <Caret className="ml-[3px]" />
          <svg viewBox="0 0 16 18" className="ml-[20px] w-[14px] h-[16px] fill-none stroke-[#444]">
            <path d="M5 1H1v16h4M11 1h4v16h-4M5.500 6h5v6h-5z" />
          </svg>
          <span className="ml-[10px] w-[37px]">Focus</span>
          <Play size={16} strokeWidth={1} className="ml-[7px] border border-[#555] rounded-full p-[2px]" />
          <div className={`${vbar} ml-[10px]`} />
          <Minus size={12} strokeWidth={1.25} className="ml-[9px]" />
          <div className="ml-[9px] w-[95px] h-[3px] bg-[#f8f9fc] relative">
            <div className="w-[28px] h-[3px] bg-[#444]" />
            <span className="absolute left-[24px] -top-[4px] w-[11px] h-[11px] rounded-full bg-white border-[1.5px] border-[#444]" />
          </div>
          <Plus size={14} strokeWidth={1.25} className="ml-[9px]" />
          <span className="ml-[14px]">115%</span>
          <Caret className="ml-[3px]" />
          <div className={`${vbar} ml-[10px]`} />
          <svg viewBox="0 0 14 16" className="ml-[20px] w-[13px] h-[15px] fill-none stroke-[#444]">
            <path d="M1 1h12v14H1zM4 5h6v6H4z" />
          </svg>
          <svg viewBox="0 0 14 16" className="ml-[19px] mr-[21px] w-[14px] h-[15px] fill-none stroke-[#444]">
            <path d="M1 1h12v14H1zM4 8h6M4 8l2-2M4 8l2 2M10 8L8 6M10 8l-2 2" />
          </svg>
        </div>
      </div>

      {/* Taskbar */}
      <div className="h-[40px] shrink-0 flex items-center bg-[linear-gradient(90deg,#d6e4c6_0%,#dde7cc_33%,#efe7de_33.5%,#ece3da_100%)] text-[#222] text-[15px] tracking-normal">
        <svg viewBox="0 0 16 16" className="ml-[16px] w-[16px] h-[16px] fill-[#111]">
          <path d="M0 2.500l6.800-1v6.100H0zM7.600 1.400L16 0v7.600H7.600zM0 8.400h6.800v6.100L0 13.500zM7.600 8.400H16V16l-8.400-1.300z" />
        </svg>
        <div className="ml-[17px] w-[286px] h-[38px] bg-white flex items-center overflow-hidden">
          <Search size={18} strokeWidth={1} className="ml-[11px] -scale-x-100" />
          <span className="ml-[9px] w-[172px] whitespace-nowrap font-['Open_Sans',sans-serif] text-[14px]">Type here to search</span>
          <Mask />
        </div>
        <svg viewBox="0 0 16 18" className="ml-[17px] w-[16px] h-[18px] fill-none stroke-[#222] stroke-[1.2]">
          <path d="M1 1h7M1 6h7v7H1zM1 17h7M12 1h3M12 6h3M12 13h3M12 17h3" />
        </svg>
        <svg viewBox="0 0 24 24" className="ml-[29px] w-[26px] h-[26px]">
          <path d="M12 1a11 11 0 0 1 11 11c0 3-2 5-5 5-2 0-4-1-4-3 0-3 4-2 4-6 0-3-3-5-6-5-5 0-8 4-9 7 1-5 4-9 9-9z" fill="#36c0b0" />
          <path d="M3 10c-2 6 2 13 9 13 3 0 6-1 8-3-5 2-12 0-12-6 0-2 1-4 3-6-3 0-6 0-8 2z" fill="#1a6fc0" />
        </svg>
        <svg viewBox="0 0 24 24" className="ml-[25px] w-[24px] h-[24px]">
          <path d="M5 2h6l1 4h8v16H4V6z" fill="#f7c948" />
          <path d="M8 14h8v8H8z" fill="#5a8fa8" />
        </svg>
        <svg viewBox="0 0 24 24" className="ml-[24px] w-[26px] h-[26px]">
          <path d="M5 1h14l3 3v19H5z" fill="#fff" stroke="#aaa" strokeWidth=".8" />
          <rect x="1" y="4" width="15" height="15" fill="#1e5bb0" />
          <text x="8.500" y="16" textAnchor="middle" className="fill-white text-[12px] font-bold">W</text>
        </svg>
        <div className="ml-[21px] w-[26px] h-[26px] rounded-full bg-[conic-gradient(#ea4335_0deg_120deg,#fbbc05_120deg_240deg,#34a853_240deg_360deg)] flex items-center justify-center">
          <div className="w-[12px] h-[12px] rounded-full bg-[#3f86f0] border-2 border-white box-content" />
        </div>
        <div className="ml-[13px] w-[48px] h-[40px] bg-[#edf2e6] flex items-center justify-center">
          <EdrawLogo />
        </div>
        <div className="ml-auto flex items-center text-[14px]">
          <div className="w-[20px] h-[20px] rounded-full bg-[linear-gradient(180deg,#f8a830,#e86a10)]" />
          <span className="ml-[10px] w-[38px] whitespace-nowrap font-['Open_Sans',sans-serif] text-[13px]">30°C</span>
          <span className="w-[40px] font-['Open_Sans',sans-serif] text-[13px]">Sunny</span>
          <ChevronUp size={18} strokeWidth={1} className="ml-[20px]" />
          <Volume2 size={16} strokeWidth={1} className="ml-[7px]" />
          <svg viewBox="0 0 12 18" className="ml-[10px] w-[11px] h-[17px] fill-none stroke-[#222]">
            <path d="M2 4h8v10H2zM4 1h4M4 17h4M5 7h2v2H5z" />
          </svg>
          <Wifi size={16} strokeWidth={1} className="ml-[12px] rotate-45 text-[#444]" />
          <div className="ml-[3px] flex flex-col items-center text-[12px] leading-[18px] w-[70px] whitespace-nowrap font-['Open_Sans',sans-serif]">
            <span>15:41</span>
            <span>13-02-2024</span>
          </div>
          <MessageSquare size={20} strokeWidth={1} className="ml-[11px] mr-[22px] -scale-x-100" />
        </div>
        <span className="absolute left-[488px] bottom-0 w-[40px] h-[2px] bg-[#1470b8]" />
        <span className="absolute left-[537px] bottom-0 w-[40px] h-[2px] bg-[#1470b8]" />
        <span className="absolute left-[583px] bottom-0 w-[48px] h-[2px] bg-[#1470b8]" />
      </div>

      {/* Background colour popover */}
      <div className="absolute left-[710px] top-[146px] w-[241px] h-[329px] bg-white rounded-b-xl rounded-t-sm shadow-[0_2px_8px_rgba(0,0,0,0.12)] pl-[16px] text-[12px] text-[#222]">
        <div className="mt-[14px] h-[18px] leading-[18px] -ml-[1px]">Recently Used Colors</div>
        <div className="mt-[6px] grid grid-cols-10 gap-x-px w-[209px]">
          {recent.map((c, i) => (
            <svg key={i} viewBox="0 0 20 16" className={`w-[20px] h-[16px] ${i === 2 ? "outline outline-1 outline-[#777]" : ""}`}>
              <rect width="20" height="16" fill={c} />
            </svg>
          ))}
        </div>
        <div className="mt-[16px] w-[209px] flex flex-col">
          {paletteRows.map((row, r) => (
            <div key={r} className="grid grid-cols-10 gap-x-px">
              {row.map((c, i) => (
                <svg key={i} viewBox="0 0 20 16" className={`w-[20px] h-[16px] ${r === 0 && i === 0 ? "outline outline-1 -outline-offset-1 outline-[#888]" : ""}`}>
                  <rect width="20" height="16" fill={c} />
                </svg>
              ))}
            </div>
          ))}
        </div>
        <div className="mt-[7px] h-[18px] leading-[18px] -ml-[1px]">Standard Colors</div>
        <div className="mt-[6px] grid grid-cols-10 gap-x-px w-[209px]">
          {standard.map((c) => (
            <svg key={c} viewBox="0 0 20 16" className="w-[20px] h-[16px]">
              <rect width="20" height="16" fill={c} />
            </svg>
          ))}
        </div>
        <div className="mt-[13px] h-[20px] flex items-center">
          <span className="w-[75px]">More Colors</span>
          <span className="w-[20px] h-[17px] border border-[#ddd] bg-[conic-gradient(#ff60c0,#ffb060,#c0ff60,#40e0c0,#4060f0,#ff60c0)]" />
        </div>
        <div className="mt-[8px] h-[20px] flex items-center">
          <span className="w-[77px]">Eyedropper</span>
          <Pipette size={15} strokeWidth={2} className="text-[#333]" />
        </div>
        <div className="mt-[8px] h-[20px] flex items-center">Remove Background</div>
      </div>
    </div>
  )
}
